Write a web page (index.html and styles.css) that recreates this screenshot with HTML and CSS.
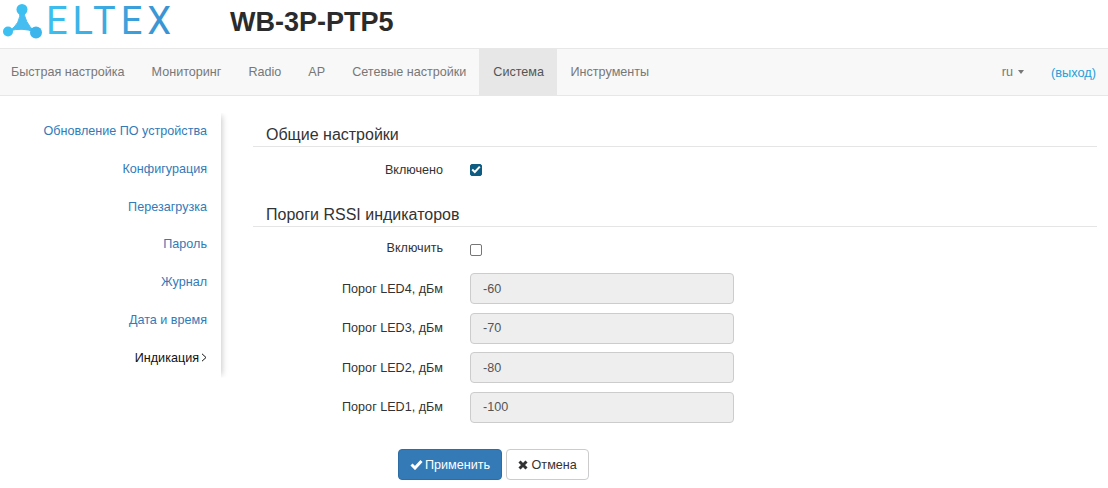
FILE: index.html
```html
<!DOCTYPE html>
<html lang="en">
<head>
  <meta charset="UTF-8">
  <title>WB-3P-PTP5</title>
  <link rel="stylesheet" href="styles.css">
</head>
<body>
  <header class="top">
    <svg class="logo" width="176" height="40" viewBox="0 0 176 40">
      <defs>
        <linearGradient id="logoGrad" x1="0" x2="1" y1="0" y2="0">
          <stop offset="0" stop-color="#3cc0f0"/>
          <stop offset="1" stop-color="#3a8fd0"/>
        </linearGradient>
      </defs>
      <path d="M20 8 Q21 22 9 29 Q22 25 35 30 Q24 20 24 8 Z" fill="#45bdf0" stroke="#45bdf0" stroke-width="1"/>
      <circle cx="22" cy="7.5" r="5.5" fill="#3cc0f2"/>
      <circle cx="8" cy="29.5" r="5" fill="#3cc0f2"/>
      <circle cx="36" cy="30.5" r="6" fill="#3cb4ec"/>
      <text x="46" y="32" class="logo-text" fill="url(#logoGrad)">ELTEX</text>
    </svg>
    <h1 class="title">WB-3P-PTP5</h1>
  </header>

  <nav class="navbar">
    <a href="#" class="first">Быстрая настройка</a>
    <a href="#">Мониторинг</a>
    <a href="#">Radio</a>
    <a href="#">AP</a>
    <a href="#">Сетевые настройки</a>
    <a href="#" class="active">Система</a>
    <a href="#">Инструменты</a>
    <span class="nav-right">
      <a href="#" class="lang">ru <i class="caret"></i></a>
      <a href="#" class="logout">(выход)</a>
    </span>
  </nav>

  <div class="main">
    <ul class="side">
      <li><a href="#">Обновление ПО устройства</a></li>
      <li><a href="#">Конфигурация</a></li>
      <li><a href="#">Перезагрузка</a></li>
      <li><a href="#">Пароль</a></li>
      <li><a href="#">Журнал</a></li>
      <li><a href="#">Дата и время</a></li>
      <li class="current"><a href="#">Индикация<svg class="chev" width="6" height="9" viewBox="0 0 6 9"><path d="M1 .8 L5 4.5 L1 8.2" fill="none" stroke="#111" stroke-width="1"/></svg></a></li>
    </ul>

    <form class="content">
      <h4 class="legend">Общие настройки</h4>
      <div class="row row-check">
        <label>Включено</label>
        <span class="check checked"><svg width="10" height="9" viewBox="0 0 10 9"><path d="M1.2 4.6 L3.8 7 L8.8 1.6" fill="none" stroke="#fff" stroke-width="2"/></svg></span>
      </div>

      <h4 class="legend legend-second">Пороги RSSI индикаторов</h4>
      <div class="row row-check row-check-second">
        <label>Включить</label>
        <span class="check"></span>
      </div>
      <div class="row row-input">
        <label>Порог LED4, дБм</label>
        <input type="text" value="-60" disabled>
      </div>
      <div class="row row-input">
        <label>Порог LED3, дБм</label>
        <input type="text" value="-70" disabled>
      </div>
      <div class="row row-input">
        <label>Порог LED2, дБм</label>
        <input type="text" value="-80" disabled>
      </div>
      <div class="row row-input">
        <label>Порог LED1, дБм</label>
        <input type="text" value="-100" disabled>
      </div>

      <div class="actions">
        <button type="button" class="btn btn-primary">
          <svg width="13" height="11" viewBox="0 0 13 11"><path d="M1.5 5.5 L5 9 L11.5 2" fill="none" stroke="#fff" stroke-width="3"/></svg>Применить
        </button>
        <button type="button" class="btn btn-cancel">
          <svg width="10" height="10" viewBox="0 0 10 10"><path d="M1.5 1.5 L8.5 8.5 M8.5 1.5 L1.5 8.5" fill="none" stroke="#333" stroke-width="3"/></svg>Отмена
        </button>
      </div>
    </form>
  </div>
</body>
</html>
```

FILE: styles.css
```css
* {
  box-sizing: border-box;
}
html, body {
  height: 100%;
}
body {
  margin: 0;
  font-family: "Liberation Sans", Arial, sans-serif;
  font-size: 12.6px;
  color: #333;
  background: #fff;
  overflow: hidden;
}
a {
  text-decoration: none;
}
.top {
  height: 48px;
  display: flex;
  align-items: flex-start;
}
.logo {
  margin-top: 2px;
  flex: none;
  overflow: visible;
}
.logo-text {
  font-family: Roboto, "Liberation Sans", sans-serif;
  font-size: 38px;
  letter-spacing: 5px;
}
.title {
  margin: 7px 0 0 54px;
  font-size: 27px;
  line-height: 30px;
  font-weight: 700;
  color: #2b2b2b;
}
.navbar {
  height: 48px;
  display: flex;
  align-items: stretch;
  background: #f8f8f8;
  border-top: 1px solid #e7e7e7;
  border-bottom: 1px solid #e7e7e7;
}
.navbar a {
  display: flex;
  align-items: center;
  padding: 0 13.5px;
  color: #777;
}
.navbar a.first {
  padding-left: 11px;
}
.navbar a.active {
  background: #e7e7e7;
  color: #555;
  margin: 0 .5px 0 -1px;
  padding: 0 12.5px 0 14.5px;
}
.nav-right {
  margin-left: auto;
  display: flex;
  padding-right: 12px;
}
.navbar .lang {
  padding: 0 27px 0 0;
  gap: 5px;
}
.navbar .logout {
  padding: 0;
  font-size: 12.8px;
  color: #27a0d8;
}
.caret {
  width: 0;
  height: 0;
  border-top: 4px solid #777;
  border-left: 3.5px solid transparent;
  border-right: 3.5px solid transparent;
}
.main {
  display: flex;
  align-items: flex-start;
}
.side {
  list-style: none;
  margin: 17px 0 0;
  padding: 0 14px 0 0;
  width: 221px;
  flex: none;
  text-align: right;
  box-shadow: 4px 0 6px -3px rgba(0, 0, 0, 0.22);
  clip-path: inset(0 -10px 0 0);
}
.side li {
  height: 37.8px;
  line-height: 36px;
}
.side a {
  color: #337ab7;
}
.side .current a {
  color: #111;
}
.chev {
  margin-left: 2px;
}
.content {
  flex: 1;
  margin: 0 11px 0 32px;
}
.legend {
  margin: 29px 0 0;
  padding: 0 0 0 13px;
  height: 22px;
  font-size: 16px;
  font-weight: 400;
  line-height: 19px;
  color: #333;
  border-bottom: 1px solid #e5e5e5;
}
.legend-second {
  margin-top: 12px;
  padding-top: 1px;
  height: 23px;
}
.row {
  display: flex;
  align-items: center;
  gap: 27px;
}
.row label {
  width: 190px;
  text-align: right;
}
.row-check {
  height: 45px;
}
.row-check-second {
  height: 42px;
}
.row-check-second .check {
  margin-top: 4px;
}
.row-input {
  height: 39.5px;
}
.check {
  width: 12px;
  height: 12px;
  display: flex;
  align-items: center;
  justify-content: center;
  border: 1px solid #767676;
  border-radius: 2px;
  background: #fff;
}
.check.checked {
  background: #0f5c82;
  border-color: #0f5c82;
}
.row input {
  width: 264px;
  height: 31px;
  padding: 0 12px;
  font: inherit;
  color: #555;
  background: #eee;
  border: 1px solid #ccc;
  border-radius: 4px;
}
.actions {
  margin: 22.2px 0 0 145px;
  display: flex;
  gap: 4px;
}
.btn {
  height: 31px;
  padding: 0 11px;
  display: flex;
  align-items: center;
  gap: 2px;
  font: inherit;
  color: #333;
  background: #fff;
  border: 1px solid #ccc;
  border-radius: 4px;
}
.btn-cancel {
  gap: 3.5px;
}
.btn-primary {
  color: #fff;
  background: #337ab7;
  border-color: #2e6da4;
}
```
